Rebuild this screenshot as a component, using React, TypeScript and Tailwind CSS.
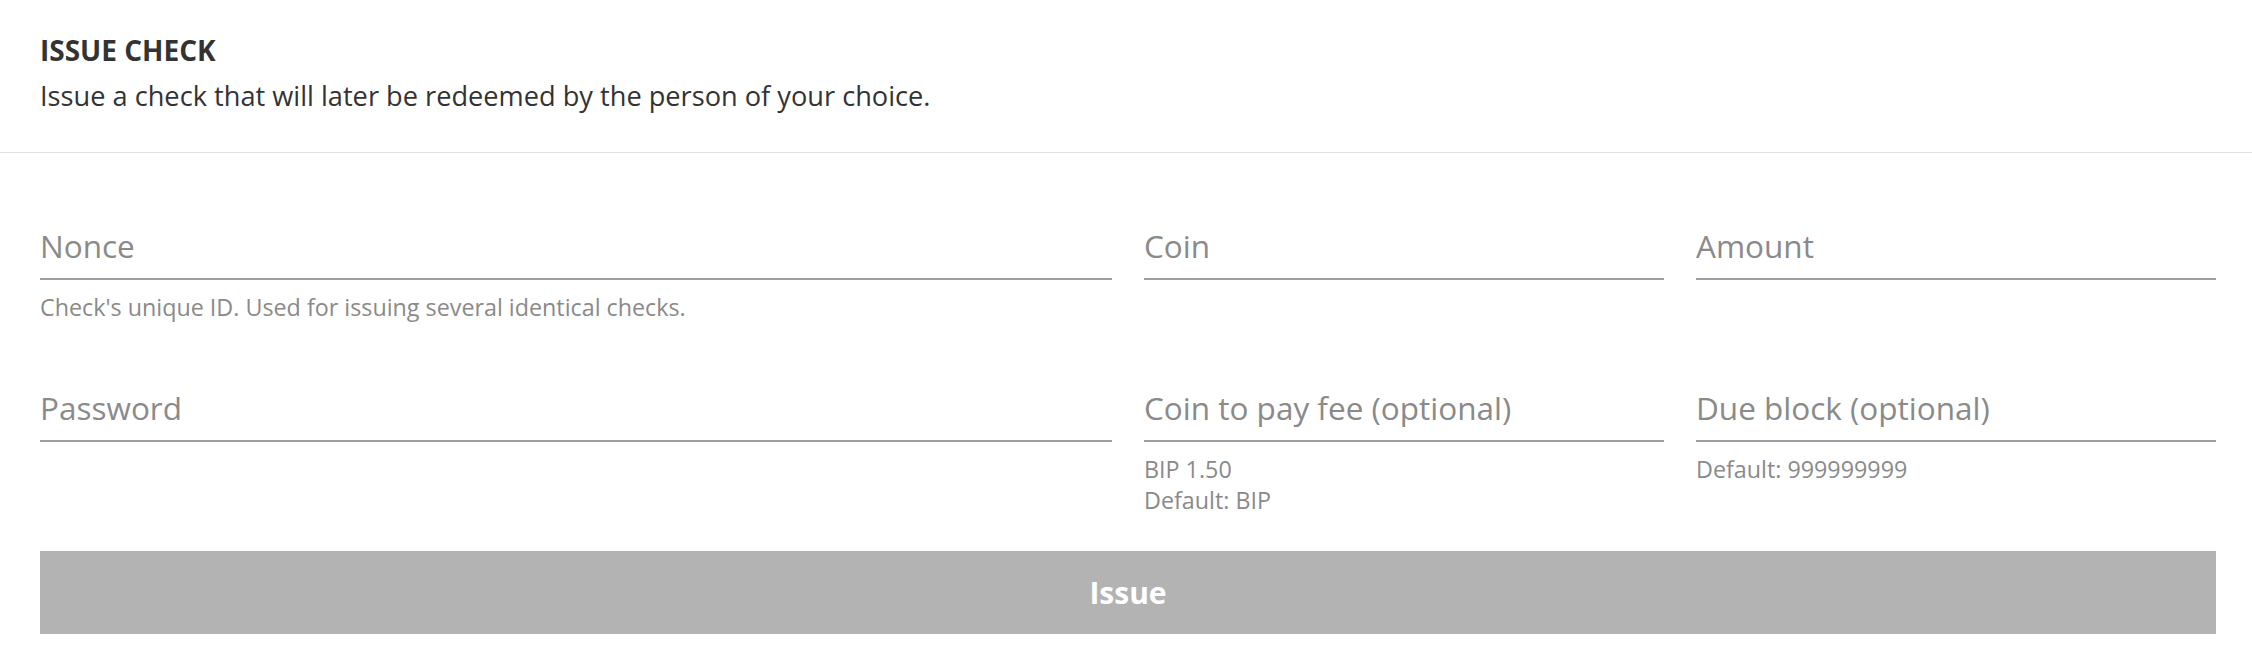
import React from "react";

const font = { fontFamily: "'Open Sans', Lato, sans-serif" };

function Field({ label, helper, span }: { label: string; helper?: string[]; span?: boolean }) {
  return (
    <div className={span ? "col-span-2 flex flex-col" : "flex flex-col"}>
      <div className="border-b-2 border-[#9e9e9e] pb-[14px]">
        <div className="text-[31.5px] leading-[36px] text-[#8a8a8a]">{label}</div>
      </div>
      {helper && (
        <div className="mt-[12px] text-[23.3px] leading-[31px] text-[#8a8a8a]">
          {helper.map((h) => (
            <div key={h}>{h}</div>
          ))}
        </div>
      )}
    </div>
  );
}

export default function App() {
  return (
    <div className="min-h-[658px] w-full bg-white" style={font}>
      <div className="border-b border-[#e0e0e0] px-[40px] pt-[34px] pb-[40px]">
        <div className="text-[28px] font-bold leading-[32px] text-[#333333]">ISSUE CHECK</div>
        <div className="mt-[14px] text-[27.2px] leading-[32px] text-[#333333]">
          Issue a check that will later be redeemed by the person of your choice.
        </div>
      </div>
      <div className="pl-[40px] pr-[36px] pt-[75px]">
        <div className="grid grid-cols-4 gap-x-[32px] gap-y-[67px]">
          <Field label="Nonce" span helper={["Check's unique ID. Used for issuing several identical checks."]} />
          <Field label="Coin" />
          <Field label="Amount" />
          <Field label="Password" span />
          <Field label="Coin to pay fee (optional)" helper={["BIP 1.50", "Default: BIP"]} />
          <Field label="Due block (optional)" helper={["Default: 999999999"]} />
        </div>
        <button className="mt-[35px] flex h-[83px] w-full items-center justify-center bg-[#b3b3b3] text-[30px] font-bold text-white">
          Issue
        </button>
      </div>
    </div>
  );
}
